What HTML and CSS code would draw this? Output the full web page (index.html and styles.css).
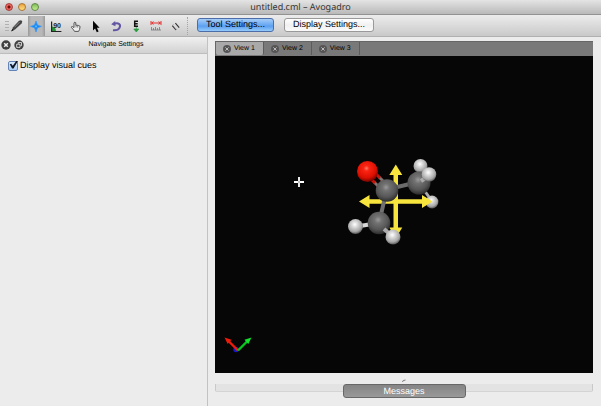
FILE: index.html
```html
<!DOCTYPE html>
<html lang="en">
<head>
<meta charset="utf-8">
<title>untitled.cml – Avogadro</title>
<link rel="stylesheet" href="styles.css">
</head>
<body>
<header class="titlebar">
  <div class="lights">
    <button class="light close" aria-label="Close"></button>
    <button class="light minimize" aria-label="Minimize"></button>
    <button class="light expand" aria-label="Zoom"></button>
  </div>
  <h1>untitled.cml – Avogadro</h1>
</header>

<nav class="toolbar">
  <span class="grip"></span>
  <div class="tools">
    <button class="tool" aria-label="Draw"><svg viewBox="0 0 20 20"><path d="M5.600 15l1.400-3.800 6-6.400 2.200-.6 1.100 1.200-.7 2-6.600 6z" fill="#444"/><path d="M8.500 11.200l5-5" stroke="#999" stroke-width=".8"/><path d="M5 15.600l2.600-1.400-1.200-1.200z" fill="#111"/></svg></button>
    <button class="tool active" aria-label="Navigate"><svg viewBox="0 0 20 20"><path d="M10 5l1.500 4 4 1.400-4 1.400L10 16l-1.500-4.200-4-1.400 4-1.400z" fill="#1787f0" stroke="#3d9cf5" stroke-width=".8"/><circle cx="10" cy="10.400" r="1.100" fill="#55b4ff"/></svg></button>
    <button class="tool" aria-label="Bond centric"><svg viewBox="0 0 20 20"><path d="M6 10.500q4 .5 4 5H6z" fill="#23983a"/><path d="M5.600 5.500v10h9.800" fill="none" stroke="#222" stroke-width="1.200"/><text x="7.200" y="12" class="glyph">90</text></svg></button>
    <button class="tool" aria-label="Manipulate"><svg viewBox="0 0 20 20"><path d="M8 10V6.800q.9-1.300 1.800 0v2.400q2.800-.2 4.300 1.200l-.5 3-1 2H8.500l-1-1.600-2-2.200q-.3-1.300 1-1l1.500 1z" fill="#eee" stroke="#555" stroke-width="1"/><path d="M10 9.400v2m1.700-1.600v1.800" stroke="#555" stroke-width=".7"/></svg></button>
    <button class="tool" aria-label="Select"><svg viewBox="0 0 20 20"><path d="M7 4.800v9.600l2.100-1.900 1.700 3.700 1.800-.8-1.700-3.600h2.700z" fill="#050505"/></svg></button>
    <button class="tool" aria-label="Auto rotate"><svg viewBox="0 0 20 20"><path d="M7.300 8.200c5.200-2.100 7.800.2 6.300 3.400-1 2.100-3.200 3-6.600 2.700" fill="none" stroke="#6256a3" stroke-width="2"/><path d="M5.200 8.200l4-3.100.3 5.100z" fill="#6256a3"/></svg></button>
    <button class="tool" aria-label="Auto optimize"><svg viewBox="0 0 20 20"><path d="M12 5.200H8.700v5H12M8.700 7.700h3" fill="none" stroke="#111" stroke-width="1.500"/><path d="M10.300 11v3M7.800 13h5l-2.500 3z" fill="#289b40" stroke="#289b40" stroke-width=".7"/></svg></button>
    <button class="tool" aria-label="Measure"><svg viewBox="0 0 20 20"><path d="M5 5v4m10-4v4M5.500 7h9M7.500 5.600L5.700 7l1.800 1.400m5-2.800L14.300 7l-1.800 1.400" fill="none" stroke="#e53131" stroke-width="1"/><path d="M5 14h10M5.500 11v3m2-2v2m2-3v3m2-2v2m2-3v3" stroke="#777" stroke-width=".8"/></svg></button>
    <button class="tool" aria-label="Align"><svg viewBox="0 0 20 20"><path d="M6.300 9.600l3.700 4.400M9.400 7.200l3.800 4.400" stroke="#333" stroke-width="1.100"/><path d="M6.500 9.300l1-.7m2.300 5.200l1-.6" stroke="#999"/></svg></button>
  </div>
  <span class="divider"></span>
  <div class="actions">
    <button class="push primary">Tool Settings...</button>
    <button class="push">Display Settings...</button>
  </div>
</nav>

<main class="workspace">
  <aside class="dock">
    <div class="dock-head">
      <button class="round" aria-label="Close panel"><svg viewBox="0 0 10 10"><circle cx="5" cy="5" r="4.700"/><path d="M3.200 3.200l3.600 3.600m0-3.600L3.200 6.800" class="bold-mark"/></svg></button>
      <button class="round" aria-label="Detach panel"><svg viewBox="0 0 10 10"><circle cx="5" cy="5" r="4.700"/><path d="M4.300 3.700V2.500h3.200v3.200H6.400M2.700 4.200h3.300v3.200H2.700z" class="mark"/></svg></button>
      <h2>Navigate Settings</h2>
    </div>
    <label class="option"><input type="checkbox" checked>Display visual cues</label>
  </aside>

  <section class="content">
    <div class="tabs" role="tablist">
      <button class="tab selected" role="tab" aria-selected="true"><svg viewBox="0 0 10 10"><circle cx="5" cy="5" r="4"/><path d="M3.400 3.400l3.200 3.200m0-3.200L3.400 6.600"/></svg>View 1</button>
      <button class="tab" role="tab" aria-selected="false"><svg viewBox="0 0 10 10"><circle cx="5" cy="5" r="4"/><path d="M3.400 3.400l3.200 3.200m0-3.200L3.400 6.600"/></svg>View 2</button>
      <button class="tab" role="tab" aria-selected="false"><svg viewBox="0 0 10 10"><circle cx="5" cy="5" r="4"/><path d="M3.400 3.400l3.200 3.200m0-3.200L3.400 6.600"/></svg>View 3</button>
    </div>
    <div class="viewport">
      <svg class="scene" viewBox="215 56 378 317" role="img" aria-label="Acetone molecule">
        <defs>
          <radialGradient id="carbon" cx=".46" cy=".36" r=".62"><stop offset="0" stop-color="#9a9a9a"/><stop offset=".25" stop-color="#727272"/><stop offset=".7" stop-color="#565656"/><stop offset="1" stop-color="#303030"/></radialGradient>
          <radialGradient id="oxygen" cx=".45" cy=".35" r=".65"><stop offset="0" stop-color="#ff7c66"/><stop offset=".2" stop-color="#fb2413"/><stop offset=".7" stop-color="#dc0f00"/><stop offset="1" stop-color="#700500"/></radialGradient>
          <radialGradient id="hydrogen" cx=".45" cy=".36" r=".64"><stop offset="0" stop-color="#fff"/><stop offset=".35" stop-color="#d4d4d4"/><stop offset=".75" stop-color="#a5a5a5"/><stop offset="1" stop-color="#555"/></radialGradient>
        </defs>
        <circle cx="432" cy="202" r="6.400" fill="url(#hydrogen)"/>
        <path d="M424 190l5 7" stroke="#aaa" stroke-width="3"/>
        <g fill="#f7e43c">
          <path d="M393.500 174h4.500v54h-4.500z"/><path d="M395.800 164.500l6.500 10.500h-13zM395.800 238l6.500-10.500h-13z"/>
          <path d="M369 199.300h53v4.400h-53z"/><path d="M359 201.500l10.500-6.500v13zM432.500 201.500L422 195v13z"/>
        </g>
        <path d="M389 189l29-7" stroke="#6b6b6b" stroke-width="4"/>
        <path d="M386 193l-7 30" stroke="#707070" stroke-width="4"/>
        <path d="M369 177l9 9m-4-14l9 9" stroke="#c71408" stroke-width="2.600"/>
        <path d="M374 182l5 5m0-10l6 6" stroke="#777" stroke-width="2.600"/>
        <path d="M371 179l4 4m1-9l4 4" stroke="#c71408" stroke-width="2.600"/>
        <circle cx="420.500" cy="166" r="7" fill="url(#hydrogen)"/>
        <circle cx="419" cy="183" r="11.500" fill="url(#carbon)"/>
        <path d="M421 181l6-4" stroke="#aaa" stroke-width="4"/>
        <circle cx="429" cy="174.500" r="7.300" fill="url(#hydrogen)"/>
        <circle cx="367.500" cy="171.500" r="10.500" fill="url(#oxygen)"/>
        <circle cx="387" cy="190.500" r="11.300" fill="url(#carbon)"/>
        <path d="M360 226l12-2" stroke="#d8d8d8" stroke-width="4"/>
        <circle cx="355.500" cy="226.500" r="7.500" fill="url(#hydrogen)"/>
        <circle cx="379" cy="223" r="11.300" fill="url(#carbon)"/>
        <path d="M384 229l7 6" stroke="#aaa" stroke-width="4"/>
        <circle cx="393" cy="237" r="7.500" fill="url(#hydrogen)"/>
        <path d="M294 182h10m-5-5v10" stroke="#fff" stroke-width="1.800"/><path d="M298.500 181.500h1v1h-1z" fill="#000"/>
        <circle cx="236" cy="349.500" r="2.700" fill="#111bd0"/>
        <path d="M238 350.500l-9-9" stroke="#ed1b0b" stroke-width="2.400"/><path d="M224.500 337.500l7 2.200-3.800 4.300z" fill="#ed1b0b"/>
        <path d="M238 350.500l9-9" stroke="#08c520" stroke-width="2.400"/><path d="M251.500 337.500l-7 2.200 3.800 4.300z" fill="#13e32c"/>
      </svg>
    </div>
    <div class="splitter"><svg viewBox="0 0 4 4"><path d="M.5 3Q.5 1 3.500 1" fill="none" stroke="#777"/></svg></div>
    <div class="messages"><button>Messages</button></div>
  </section>
</main>
</body>
</html>
```

FILE: styles.css
```css
* { box-sizing: border-box; }
body {
  margin: 0;
  height: 100vh;
  display: flex;
  flex-direction: column;
  background: #ececec;
  color: #000;
  font: 9px "Liberation Sans", Arial, sans-serif;
  text-rendering: geometricPrecision;
}
button { border: 0; padding: 0; margin: 0; font: inherit; color: inherit; background: none; text-rendering: inherit; }
h1, h2 { margin: 0; font-weight: normal; }
svg { display: block; }

.titlebar {
  display: grid;
  grid-template-columns: 1fr auto 1fr;
  align-items: center;
  height: 15px;
  background: linear-gradient(#e4e4e4, #b9b9b9);
  border-bottom: 1px solid #929292;
}
.titlebar h1 { font: 9px/14px "Noto Sans", sans-serif; color: #333; }
.lights { display: flex; gap: 5px; padding-left: 5px; }
.light { width: 8px; height: 8px; border-radius: 50%; border: 1px solid; }
.close { background: radial-gradient(circle, #6f0c0c 20%, #f0685f 50%, #e84b47); border-color: #a6403e; }
.minimize { background: linear-gradient(#e8a33c, #ffdf83); border-color: #ad7630; }
.expand { background: linear-gradient(#80bd58, #c2ed91); border-color: #618a45; }

.toolbar {
  display: flex;
  align-items: center;
  height: 22px;
  padding-left: 5px;
  background: linear-gradient(#ececec, #c9c9c9);
  border-bottom: 1px solid #b0b0b0;
}
.grip { width: 4px; height: 12px; background: radial-gradient(circle, #b0b0b0 30%, transparent 40%) 0 0 / 2px 3px; }
.tools { display: flex; margin-left: -3px; }
.tool { width: 20px; height: 20px; }
.tool svg { width: 20px; height: 20px; }
.active { background: linear-gradient(90deg, transparent 2px, #999 2px, #b8b8b8 5px, #b8b8b8 16px, #999 19px, transparent 19px); }
.glyph { font: bold 7px "Liberation Sans", sans-serif; fill: #222; }
.divider { height: 18px; margin-left: 1px; border-left: 1px dotted #a5a5a5; }
.actions { display: flex; gap: 10px; padding: 0 0 2px 9px; }
.push {
  height: 14px;
  padding: 0 8px;
  border: 1px solid #999;
  border-radius: 3px;
  background: linear-gradient(#fff, #f1f1f1 50%, #fafafa);
  line-height: 11px;
}
.push.primary {
  border-color: #4c6da8;
  background: linear-gradient(#a6cdf8, #68a8f2 50%, #5c9ff0 60%, #94cbfb);
}

.workspace { flex: 1; display: flex; min-height: 0; }
.dock { flex: 0 0 208px; border-right: 1px solid #c2c2c2; }
.dock-head {
  display: flex;
  align-items: center;
  gap: 3px;
  height: 17px;
  padding-left: 1px;
  background: linear-gradient(#f0f0f0, #d2d2d2);
  border-bottom: 1px solid #bdbdbd;
}
.round, .round svg { width: 10px; height: 10px; }
.round circle { fill: #404040; }
.round path { fill: none; stroke: #eee; }
.round .mark { stroke-width: .8; }
.round .bold-mark { stroke-width: 1.5; }
.dock-head h2 { flex: 1; padding-right: 2px; font-size: 7px; line-height: 18px; text-align: center; }
.option { display: flex; align-items: center; gap: 2px; padding: 6px 8px; line-height: 11px; }
.option input {
  appearance: none;
  position: relative;
  width: 10px;
  height: 10px;
  margin: 0;
  border: 1px solid #6484b8;
  border-radius: 2px;
  background: linear-gradient(#d9e9fb, #a9cdf6);
}
.option input:checked::after {
  content: "";
  position: absolute;
  left: 0;
  top: -1px;
  width: 9px;
  height: 8px;
  background: #101828;
  clip-path: polygon(8% 48%, 24% 42%, 42% 66%, 84% 0, 100% 6%, 50% 100%, 34% 100%);
}

.content { flex: 1; min-width: 0; display: flex; flex-direction: column; padding: 4px 8px 8px 7px; }
.tabs { display: flex; height: 15px; background: #797979; border-top: 1px solid #666; border-left: 1px solid #666; }
.tab {
  display: flex;
  align-items: center;
  gap: 2px;
  height: 13px;
  padding: 0 8px 0 6px;
  border-right: 1px solid #5c5c5c;
  font-size: 7px;
}
.tab.selected { background: #a9a9a9; border-radius: 0 0 2px 2px; }
.tab svg { width: 10px; height: 10px; }
.tab circle { fill: #555; }
.tab path { stroke: #bbb; stroke-width: 1; }
.viewport { flex: 1; min-height: 0; background: #060606; }
.scene { width: 100%; height: 100%; }
.splitter { display: flex; justify-content: center; align-items: center; height: 11px; }
.splitter svg { width: 4px; height: 4px; margin-top: 5px; }
.messages {
  display: flex;
  justify-content: center;
  height: 14px;
  background: linear-gradient(#e3e3e3, #e3e3e3) top / 100% 7px no-repeat;
}
.messages::before, .messages::after { content: ""; flex: 1; height: 7px; border-bottom: 1px solid #d4d4d4; }
.messages::before { border-left: 1px solid #c9c9c9; border-bottom-left-radius: 2px; }
.messages::after { border-right: 1px solid #c9c9c9; border-bottom-right-radius: 2px; }
.messages button {
  width: 123px;
  height: 14px;
  border: 1px solid #686868;
  border-radius: 3px;
  background: linear-gradient(#858585, #999);
  color: #fff;
  line-height: 12px;
}
```
